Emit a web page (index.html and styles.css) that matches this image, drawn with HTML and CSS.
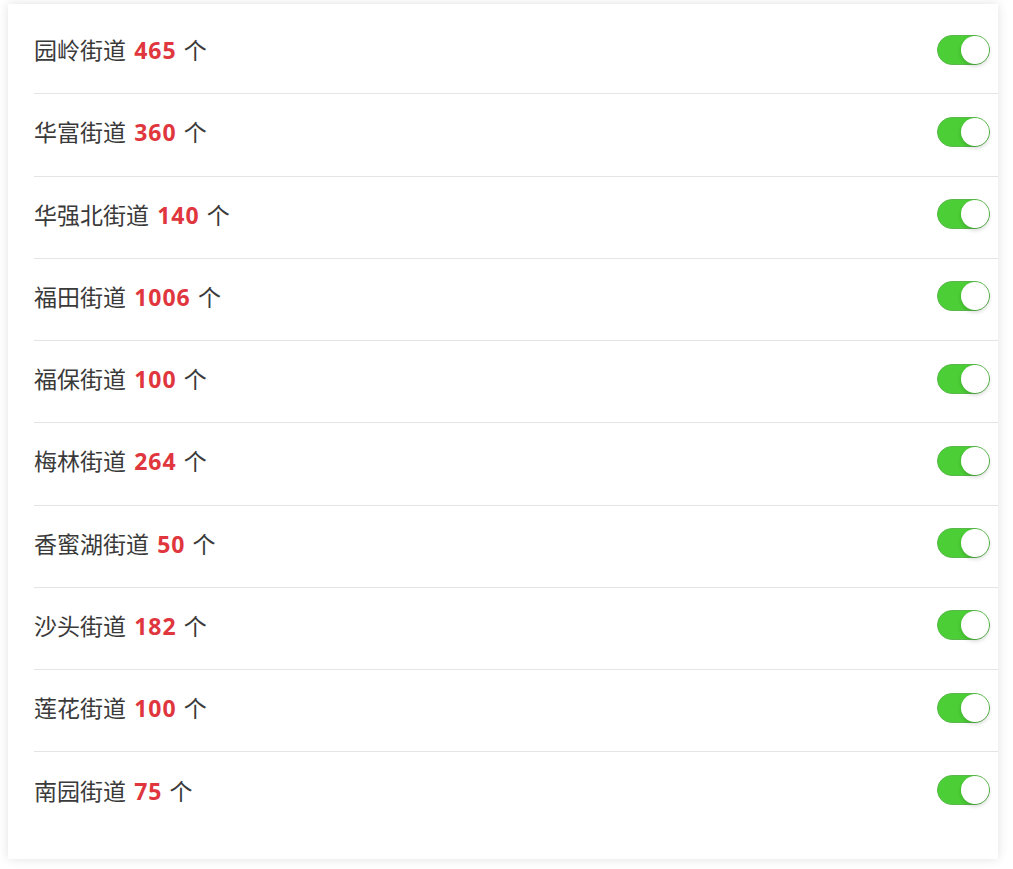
FILE: index.html
```html
<!DOCTYPE html>
<html lang="zh-CN">
<head>
<meta charset="utf-8">
<title>街道列表</title>
<link rel="stylesheet" href="styles.css">
</head>
<body>
<div class="card">
  <div class="row"><span class="label">园岭街道 <b class="num">465</b> 个</span><span class="switch"><span class="knob"></span></span></div>
  <div class="row"><span class="label">华富街道 <b class="num">360</b> 个</span><span class="switch"><span class="knob"></span></span></div>
  <div class="row"><span class="label">华强北街道 <b class="num">140</b> 个</span><span class="switch"><span class="knob"></span></span></div>
  <div class="row"><span class="label">福田街道 <b class="num">1006</b> 个</span><span class="switch"><span class="knob"></span></span></div>
  <div class="row"><span class="label">福保街道 <b class="num">100</b> 个</span><span class="switch"><span class="knob"></span></span></div>
  <div class="row"><span class="label">梅林街道 <b class="num">264</b> 个</span><span class="switch"><span class="knob"></span></span></div>
  <div class="row"><span class="label">香蜜湖街道 <b class="num">50</b> 个</span><span class="switch"><span class="knob"></span></span></div>
  <div class="row"><span class="label">沙头街道 <b class="num">182</b> 个</span><span class="switch"><span class="knob"></span></span></div>
  <div class="row"><span class="label">莲花街道 <b class="num">100</b> 个</span><span class="switch"><span class="knob"></span></span></div>
  <div class="row last"><span class="label">南园街道 <b class="num">75</b> 个</span><span class="switch"><span class="knob"></span></span></div>
</div>
</body>
</html>
```
FILE: styles.css
```css
html, body {
  margin: 0;
  padding: 0;
  background: #ffffff;
}
body {
  padding: 4px 15px 11px 8px;
  font-family: "Open Sans", "Noto Sans CJK SC", sans-serif;
}
.card {
  background: #ffffff;
  box-shadow: 0 0 10px rgba(0, 0, 0, 0.12);
  padding: 8px 0 24px 26px;
}
.row {
  display: flex;
  align-items: center;
  justify-content: space-between;
  height: 75.25px;
  padding: 0 8px 6px 0;
  border-bottom: 1px solid #e4e4e4;
}
.row.last {
  border-bottom: none;
  height: 76.25px;
}
.label {
  font-size: 23px;
  color: #3a3a3a;
  font-family: "Noto Sans CJK SC", sans-serif;
  line-height: 30px;
}
.num {
  font-family: "Open Sans", "Noto Sans CJK SC", sans-serif;
  font-weight: 700;
  color: #e0363d;
  letter-spacing: 1px;
  margin: 0 2px 0 3px;
}
.switch {
  display: flex;
  justify-content: flex-end;
  align-items: center;
  box-sizing: border-box;
  width: 53px;
  height: 30px;
  border-radius: 15px;
  background: #4ccf36;
  border: 1px solid #58b84a;
}
.knob {
  width: 28px;
  height: 28px;
  border-radius: 50%;
  background: #ffffff;
  box-shadow: 0 2px 4px rgba(0, 0, 0, 0.18);
}
```
